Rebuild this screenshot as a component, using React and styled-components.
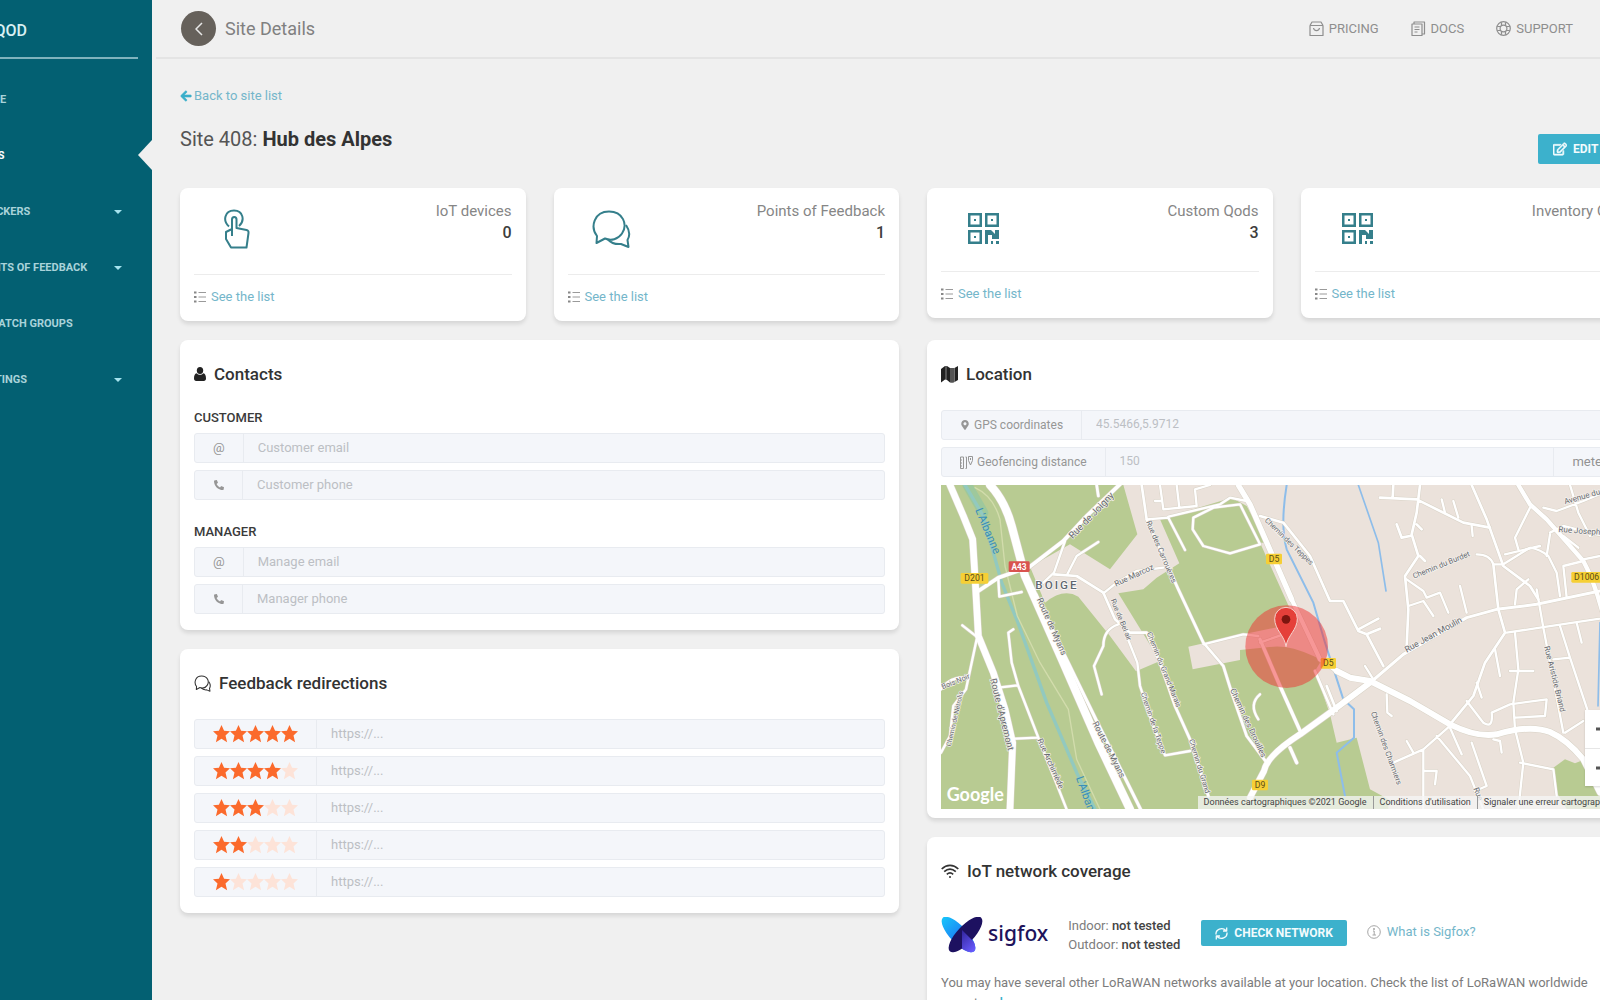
import React from "react";
import styled, { createGlobalStyle } from "styled-components";
import { FaArrowLeft, FaMapMarkerAlt, FaPhoneAlt, FaRegEdit } from "react-icons/fa";

const GlobalStyle = createGlobalStyle`
    * {
        box-sizing: border-box;
    }
    body {
        margin: 0;
        background-color: #f0f0f0;
        color: #7c7c7c;
        font-family: Roboto, "Liberation Sans", sans-serif;
        font-size: 13px;
        line-height: 20px;
    }
    h1, h2, h3, h4, p, ul {
        margin: 0;
        padding: 0;
    }
    button, input {
        font-family: inherit;
    }
    a {
        color: #74b6ca;
        text-decoration: none;
    }
    svg {
        flex-shrink: 0;
    }
`
const Frame = styled.div`
    height: 100vh;
    overflow: hidden;
`
/* The sheet is wider than the window on both sides */
const Shell = styled.div`
    display: flex;
    height: 100%;
    margin: 0 -74px 0 -108px;
`
const Sidebar = styled.aside`
    width: 260px;
    flex-shrink: 0;
    background-color: #036072;
    color: #b5dbe1;
`
const Brand = styled.div`
    height: 59px;
    margin: 0 14px 0 15px;
    padding: 4px 0 0 60px;
    display: flex;
    align-items: center;
    border-bottom: 2px solid #7fb3bd;
    color: #d8f0f3;
    font-size: 16px;
    font-weight: 500;
`
const Menu = styled.ul`
    list-style: none;
    padding-top: 13px;
`
const MenuItem = styled.li`
    position: relative;
    &::after {
        content: "";
        display: ${props => props.$active ? "block" : "none"};
        position: absolute;
        right: 0;
        top: 12px;
        border: 15px solid transparent;
        border-left-width: 0;
        border-right: 14px solid #f0f0f0;
    }
`
const MenuLink = styled.a`
    height: 56px;
    padding: 0 30px 0 83px;
    display: flex;
    align-items: center;
    justify-content: space-between;
    color: ${props => props.$active ? "#ffffff" : "#a9d3da"};
    font-size: 11px;
    font-weight: 700;
    white-space: nowrap;
`
const Caret = styled.span`
    border: 4px solid transparent;
    border-top-color: #a5e3ee;
    border-bottom-width: 0;
`
const Main = styled.main`
    flex: 1;
    min-width: 0;
    overflow-y: auto;
    scrollbar-width: none;
`
const Header = styled.header`
    height: 59px;
    margin-left: 4px;
    padding: 0 101px 0 25px;
    display: flex;
    align-items: center;
    border-bottom: 2px solid #e4e4e4;
`
const RoundButton = styled.button`
    width: 35px;
    height: 35px;
    margin-right: 9px;
    padding: 0;
    display: flex;
    align-items: center;
    justify-content: center;
    border: none;
    border-radius: 50%;
    background-color: #66615b;
    color: #e8e8e8;
`
const PageName = styled.h1`
    flex-grow: 1;
    color: #808080;
    font-size: 18px;
    font-weight: 400;
`
const TopNav = styled.nav`
    display: flex;
    gap: 32px;
`
const TopLink = styled.a`
    display: flex;
    align-items: center;
    gap: 5px;
    color: #8e8e8e;
    font-size: 13px;
`
const Content = styled.div`
    padding: 27px 28px 28px;
`
const BackLink = styled.a`
    width: fit-content;
    height: 20px;
    display: flex;
    align-items: center;
    gap: 2px;
    > svg {
        color: #3aafca;
        stroke: #3aafca;
        stroke-width: 30px;
    }
`
const TitleRow = styled.div`
    display: flex;
    align-items: flex-start;
    justify-content: space-between;
    margin: 19px 0 24px;
`
const Title = styled.h2`
    color: #555555;
    font-size: 20px;
    font-weight: 400;
    line-height: 28px;
    > b {
        color: #333333;
        font-weight: 700;
    }
`
const Button = styled.button`
    height: 30px;
    margin-top: 9px;
    padding: 0 15px;
    display: flex;
    align-items: center;
    gap: 6px;
    border: none;
    border-radius: 2px;
    background-color: #3cb1cc;
    color: #f2fbfd;
    font-size: 12px;
    font-weight: 700;
    white-space: nowrap;
`
const EditButton = styled(Button)`
    min-width: 108px;
`
const CheckButton = styled(Button)`
    height: 26px;
    margin: 0 0 4px;
    padding: 0 14px;
`
const Stats = styled.div`
    display: grid;
    grid-template-columns: repeat(4, 1fr);
    align-items: start;
    gap: 28px;
    min-height: 133px;
    margin-bottom: 19px;
`
const Columns = styled.div`
    display: grid;
    grid-template-columns: repeat(2, minmax(0, 1fr));
    gap: 28px;
`
const Column = styled.div`
    display: flex;
    flex-direction: column;
    gap: 19px;
`
const Card = styled.section`
    padding: 0 14px ${props => props.$bottom || 0}px;
    border-radius: 8px;
    background-color: #ffffff;
    box-shadow: 0 3px 4px rgba(0, 0, 0, 0.11);
`
const StatBody = styled.div`
    height: ${props => props.$tall ? 87 : 84}px;
    display: flex;
    justify-content: space-between;
    border-bottom: 1px solid #ececec;
`
const StatIcon = styled.div`
    width: 86px;
    height: 82px;
    display: flex;
    align-items: center;
    justify-content: center;
    color: #357f8b;
`
const StatText = styled.div`
    padding-top: 12px;
    text-align: right;
    color: #868686;
    font-size: 15px;
    line-height: 22px;
    white-space: nowrap;
    > strong {
        display: block;
        color: #3d3d3d;
        font-size: 16px;
        font-weight: 500;
    }
`
const StatFoot = styled.div`
    height: 46px;
    padding-bottom: 2px;
    display: flex;
    align-items: center;
    gap: 5px;
    color: #9a9a9a;
`
const CardTitle = styled.h3`
    height: 70px;
    padding: 22px 0 24px;
    display: flex;
    align-items: center;
    gap: 8px;
    color: #333333;
    font-size: 17px;
    font-weight: 500;
    line-height: 24px;
`
const GroupTitle = styled.h4`
    margin-bottom: 7px;
    color: #3a3a3a;
    font-size: 13px;
    font-weight: 500;
    line-height: 16px;
`
const Fields = styled.div`
    display: flex;
    flex-direction: column;
    gap: 7px;
    font-size: ${props => props.$compact ? 12 : 13}px;
    & + ${GroupTitle} {
        margin-top: 24px;
    }
`
const Field = styled.div`
    height: 30px;
    display: flex;
    border: 1px solid #e8ebf0;
    border-radius: 3px;
    background-color: #f4f6fa;
`
const Addon = styled.label`
    min-width: ${props => props.$width || 48}px;
    padding: 0 18px;
    display: flex;
    align-items: center;
    justify-content: center;
    gap: 4px;
    border-right: 1px solid #e8ebf0;
    color: #969696;
    white-space: nowrap;
`
const Unit = styled.span`
    padding: 0 18px;
    border-left: 1px solid #e8ebf0;
    color: #929292;
    font-size: 13px;
    line-height: 28px;
`
const Input = styled.input`
    flex: 1;
    min-width: 0;
    padding: 0 14px 2px;
    border: none;
    outline: none;
    background: none;
    color: #bcbfc4;
    font-size: inherit;
    &::placeholder {
        color: #bcbfc4;
        opacity: 1;
    }
`
const MapBox = styled.div`
    position: relative;
    height: 324px;
    margin-top: 8px;
    overflow: hidden;
    > svg {
        display: block;
        width: 100%;
        height: 100%;
    }
`
const ZoomBox = styled.div`
    position: absolute;
    right: 7px;
    bottom: 23px;
    width: 40px;
    background-color: #ffffff;
    box-shadow: 0 1px 2px rgba(0, 0, 0, 0.15);
`
const ZoomButton = styled.button`
    width: 100%;
    height: 38px;
    padding: 0;
    display: flex;
    align-items: center;
    justify-content: center;
    border: none;
    background: none;
    color: #555555;
    & + & {
        border-top: 1px solid #e6e6e6;
    }
`
const Credits = styled.div`
    position: absolute;
    right: 0;
    bottom: 0;
    display: flex;
    padding-right: 4px;
    background-color: rgba(245, 245, 245, 0.75);
    color: #444444;
    font-size: 9px;
    line-height: 13px;
    white-space: nowrap;
    > * {
        padding: 0 6px;
        color: inherit;
    }
    > * + * {
        border-left: 1px solid #999999;
    }
`
const Network = styled.div`
    height: 56px;
    display: flex;
    align-items: center;
    gap: 20px;
    white-space: nowrap;
    > a {
        margin-bottom: 6px;
        display: flex;
        align-items: center;
        gap: 6px;
    }
`
const Sigfox = styled.div`
    display: flex;
    align-items: center;
    gap: 5px;
    color: #20135b;
    font-family: "Noto Sans", "Open Sans", sans-serif;
    font-size: 21px;
    font-weight: 500;
    line-height: 36px;
    > span {
        padding-bottom: 4px;
    }
`
const Coverage = styled.div`
    margin-right: 1px;
    line-height: 19px;
    b {
        color: #444444;
        font-weight: 500;
    }
`
const Note = styled.p`
    margin-top: 10px;
    a {
        color: #3cb1cc;
        font-weight: 500;
    }
`

const Line = ({ size, width, height, box = "0 0 24 24", stroke = 1.5, children }) => (
    <svg width={width || size} height={height || size} viewBox={box} fill="none" stroke="currentColor"
        strokeWidth={stroke} strokeLinejoin="round" aria-hidden="true">
        {children}
    </svg>
)
const TouchIcon = () => (
    <Line width={26} height={40} box="0 0 26 40" stroke={2}>
        <path d="M5 17.500C-1.500 12 .5 1.500 10 1.500S21 12 15 17" />
        <path d="M8 27V10.500c0-3.500 4.500-3.500 4.500 0V19l10 2c1.500.3 2.300 1.500 2 3l-2 14.500H7L2 30v-7l6-3" />
    </Line>
)
const BubblesIcon = ({ size = 40, stroke = 2 }) => (
    <Line size={size} box="0 0 40 40" stroke={stroke}>
        <path d="M6 27C-1 18 3 2.500 18 2.500c14 0 19 13 13 22-4 6-11 7.500-17 5L5.500 34z" />
        <path d="M35 16c4 6 4 11 1.500 15l1 7-7.500-3c-6 .5-10-1-13-4.500" />
    </Line>
)
const QrIcon = () => (
    <svg width="32" height="32" viewBox="0 0 32 32" fill="currentColor" aria-hidden="true">
        <path fillRule="evenodd" d="M0 0h14v14H0zM2.500 2.500v9h9v-9zM17 0h14v14H17zM19.500 2.500v9h9v-9zM0 17h14v14H0zM2.500 19.500v9h9v-9z" />
        <path d="M6 6h2v2H6zM23 6h2v2h-2zM6 23h2v2H6zM17 17h6l4 4V17h4v9h-7v-4h-4v9h-3zM23 28h2v3h-2zM28 28h3v3h-3z" />
    </svg>
)
const ListIcon = () => (
    <Line size={12} box="0 0 12 12" stroke={1}>
        <path d="M4.500 1.500H12M4.500 6H12M4.500 10.500H12" />
        <path d="M0 1.500h2.500M0 6h2.500M0 10.500h2.500" stroke="#888888" strokeWidth="2" />
    </Line>
)
const UserIcon = () => (
    <svg width="12" height="14" viewBox="0 0 12 14" fill="#222222" aria-hidden="true">
        <ellipse cx="6" cy="3.500" rx="3.200" ry="3.500" />
        <path d="M2.600 6.200C.8 6.600 0 8.500 0 11.500 0 13 .8 14 2.200 14h7.600c1.400 0 2.200-1 2.200-2.500 0-3-.8-4.900-2.600-5.300-2 2-4.800 2-6.800 0z" />
    </svg>
)
const FoldedMapIcon = () => (
    <svg width="17" height="17" viewBox="0 0 17 17" aria-hidden="true">
        <path fill="#222222" d="M0 3l4-3v13.500L0 16.500zM6 0l3 2v14.500L6 14zM13.500 2L17 0v14l-3.500 2z" />
        <path fill="#555555" d="M4 0h2v14L4 13.500zM9 2h4.500v14c-1.500 1-3 1-4.500.5z" />
    </svg>
)
const WifiIcon = () => (
    <Line width={18} height={15} box="0 0 18 15" stroke={1.7}>
        <path d="M.7 5c5-4.800 11.600-4.800 16.600 0M3.200 7.700c3.700-3.400 7.900-3.400 11.600 0M5.800 10.300c2.200-1.900 4.200-1.900 6.400 0" />
        <circle cx="9" cy="13" r="1" fill="currentColor" stroke="none" />
    </Line>
)
const FenceIcon = () => (
    <Line size={13} box="0 0 13 13" stroke={1}>
        <path d="M.5 1h3v11.500h-3zM5.500 1h1v11.500h-1M.5 4h1.500M.5 7h1.500M.5 10h1.500" />
        <path d="M12.500.5v4L10.500 9 8.500 4.500v-4zM10.500 2v2" />
    </Line>
)
const BagIcon = () => (
    <Line size={15} box="0 0 15 15" stroke={1.200}>
        <path d="M1 4.500h13v10H1zM1 4.500L3 1h9l2 3.500M4.500 7c.5 3.500 5.500 3.500 6 0" />
    </Line>
)
const DocsIcon = () => (
    <Line size={15} box="0 0 15 15" stroke={1.200}>
        <path d="M1 3h10v11.500H1zM3 3V1h10.500v12H11M3.500 6h5M3.500 8.500h5M3.500 11h3" />
    </Line>
)
const SupportIcon = () => (
    <Line size={15} box="0 0 15 15" stroke={1.200}>
        <circle cx="7.500" cy="7.500" r="6.800" />
        <circle cx="7.500" cy="7.500" r="3.400" />
        <path d="M5.500 1.200v3.500M9.500 1.200v3.500M5.500 10.300v3.500M9.500 10.300v3.500M1.200 5.500h3.500M1.200 9.500h3.500M10.300 5.500h3.500M10.300 9.500h3.500" />
    </Line>
)
const ReloadIcon = () => (
    <Line size={13} box="0 0 13 13" stroke={1.300}>
        <path d="M1 7.500C.5 2.500 7-.5 11 3.500M11.700.5v3.500H8M12 5.500c.5 5-6 8-10 4M1.300 12.500V9H5" />
    </Line>
)
const InfoIcon = () => (
    <Line size={14} box="0 0 14 14" stroke={1}>
        <circle cx="7" cy="7" r="6.300" stroke="#a5a5a5" />
        <path d="M6 6h1.200v4M5.500 10h3.500M6.500 3.500h1v1h-1z" stroke="#a5a5a5" />
    </Line>
)
const Butterfly = () => (
    <svg width="42" height="36" viewBox="0 0 42 36" aria-hidden="true">
        <defs>
            <linearGradient id="wing" x1="0" x2="0.5" y1="0" y2="0">
                <stop offset="0" stopColor="#17c4fa" />
                <stop offset="1" stopColor="#1c86f5" />
            </linearGradient>
            <linearGradient id="tail" x1="0.5" x2="1" y1="0" y2="0">
                <stop offset="0" stopColor="#3326a0" />
                <stop offset="1" stopColor="#6a5cff" />
            </linearGradient>
            <clipPath id="right-half">
                <path d="M21 13L42 34V36H21z" />
            </clipPath>
        </defs>
        <ellipse cx="17.500" cy="17.500" rx="23" ry="8.500" transform="rotate(47 17.500 17.500)" fill="url(#wing)" />
        <ellipse cx="24.500" cy="17.500" rx="23" ry="8.500" transform="rotate(-47 24.500 17.500)" fill="#1d1160" />
        <g clipPath="url(#right-half)">
            <ellipse cx="17.500" cy="17.500" rx="23" ry="8.500" transform="rotate(47 17.500 17.500)" fill="url(#tail)" />
        </g>
    </svg>
)
const Stars = ({ count }) => (
    <svg width="85" height="18" viewBox="0 0 85 18" role="img" aria-label={`${count} stars`}>
        {[0, 1, 2, 3, 4].map(i => (
            <path key={i} transform={`translate(${i * 17} 0)`} fill={i < count ? "#fb6a2c" : "#fde3d8"}
                d="M8.500 0l2.600 5.800 5.900.4-4.500 4.300 1.600 6.800-5.600-3.500-5.600 3.500 1.600-6.800L0 6.200l5.900-.4z" />
        ))}
    </svg>
)

// [width, path], in thirds of a pixel
const roads = [
    [20, "M60 27L100 120L128 190L136 320L145 480L190 590L225 700L248 800L240 1000"],
    [24, "M180 27Q225 75 245 150L285 300L400 560L505 800L600 1000"],
    [9, "M318 355L400 530L500 735L632 1000"],
    [11, "M145 345L205 305L300 272L400 195L470 120L575 20"],
    [8, "M500 27L505 60"],
    [7, "M405 195L372 290L340 320M505 198L440 240L412 295"],
    [8, "M372 295L440 300L520 350L555 430L600 470L650 470L690 560L735 690L780 790L835 960"],
    [7, "M520 352L560 320L620 285L700 275"],
    [7, "M565 445Q520 460 520 510L492 570L515 655"],
    [7, "M590 480L622 560L630 630L670 750L705 838L780 825"],
    [8, "M635 27L650 130L700 240L745 340L820 500L880 570L905 650L950 780L1010 860"],
    [7, "M650 130L715 125L765 222M690 27L700 100L800 90L795 40L840 27M740 27L748 95M675 75L695 75"],
    [7, "M715 122L870 85L900 65L950 75"],
    [7, "M790 125L850 95L930 85L990 205L900 232L820 210L788 160Z"],
    [7, "M820 505L940 475L985 480"],
    [7, "M990 655Q955 685 985 730"],
    [7, "M205 310L208 362L275 348M97 448L140 482"],
    [7, "M140 490L108 640L70 690L60 780L33 830M33 640Q60 600 110 605"],
    [7, "M250 460L235 470L245 560L265 630L325 785L410 1000M205 635L262 628M255 788L322 785"],
    [16, "M925 27L960 85L1085 370"],
    [13, "M1085 370L1170 550L1220 585"],
    [18, "M1220 585L1260 605L1320 615L1440 675L1560 745Q1640 785 1700 775Q1800 745 1860 768Q1910 790 1960 850L2010 950"],
    [18, "M1320 620L1200 710L1110 775Q1010 840 1002 885L960 965"],
    [10, "M990 490L1050 630L1115 775M1080 815L1100 860"],
    [8, "M1155 585L1210 715M1190 630L1220 705"],
    [7, "M990 500L1060 475"],
    [8, "M990 120L1060 140L1140 240L1200 375L1240 375L1285 465L1310 475L1360 570M1285 460L1345 428M1310 475L1350 458"],
    [9, "M1330 612L1420 535L1610 425L1700 400L1820 385L2010 345L2110 330"],
    [8, "M1470 27L1460 110L1445 175L1465 240L1425 300L1435 400L1430 510M1350 65L1460 70L1530 105L1600 140L1680 155M1390 27L1388 65M1400 145L1415 185L1440 180M1460 145L1475 160M1470 240L1485 255"],
    [8, "M1625 27L1670 130L1720 270L1800 330L1825 370M1690 265L1705 400L1725 470L1665 560L1630 660L1560 745"],
    [7, "M1430 310L1480 345L1490 365L1530 350L1555 410M1435 390L1480 375L1510 420M1590 330L1610 410M1535 70L1545 110M1570 75L1585 125M1625 150L1628 180"],
    [7, "M1640 235Q1680 235 1690 265L1720 265L1800 215Q1830 220 1855 240L1880 290L1890 360"],
    [7, "M1800 95L1755 185L1765 220M1725 235L1830 210M1860 175L1850 240M1755 385L1760 340L1795 310M1910 365L1900 270L1960 255"],
    [13, "M1765 27L1800 85L1850 130L1960 255Q1990 310 2015 400L2030 450"],
    [7, "M1730 470L1830 455L2010 428L2110 410M1820 340L1840 455L1860 560L1900 770"],
    [7, "M1840 95L1880 105L1960 75L2020 50M1860 170L1900 150L2040 185M1900 180L1945 215M1920 27L1945 110L1980 180M1960 250L2060 230"],
    [7, "M1755 470L1765 580L1750 680L1755 760L1780 860L1765 1000M1740 585L1810 585M1695 520L1710 600M1770 860L1870 880L1880 960"],
    [7, "M1610 675L1660 740Q1690 760 1685 710L1740 685L1850 670L1845 720L1755 725M1640 620L1655 665"],
    [7, "M1890 450L1920 545L1975 710M1920 545L1870 550M1940 440L1955 500M1905 770L1960 735"],
    [7, "M1565 745L1480 820L1390 860M1520 780L1620 900L1660 1000M1480 820L1480 1000M1485 885L1520 885L1515 925M1430 795L1450 830M1560 755L1595 835"],
    [7, "M1370 655L1372 710L1385 720M1305 570L1330 610M1625 800L1670 930L1635 945M1690 790L1710 795L1715 830"],
]

// [x, y, angle, size, text]
const labels = [
    [428, 190, -46, 29, "Rue de Joigny"],
    [648, 138, 67, 23, "Rue des Carrouères"],
    [558, 332, -25, 24, "Rue Marcoz"],
    [542, 372, 68, 22, "Rue de Bel air"],
    [320, 370, 66, 26, "Route de Myans"],
    [487, 742, 63, 26, "Route de Myans"],
    [180, 610, 76, 28, "Route d'Apremont"],
    [322, 792, 66, 24, "Rue Archimède"],
    [650, 472, 68, 22, "Chemin du Grand Marais"],
    [632, 652, 71, 22, "Chemin de la Teppe"],
    [777, 792, 73, 22, "Chemin du Grand"],
    [900, 642, 65, 24, "Chemin des Drouilles"],
    [62, 812, -77, 20, "Chemin de Nétrolis"],
    [38, 640, -22, 22, "Bois Noir"],
    [1003, 135, 44, 22, "Chemin des Teppes"],
    [1452, 308, -22, 23, "Chemin du Burdet"],
    [1430, 530, -29, 26, "Rue Jean Moulin"],
    [1842, 512, 76, 24, "Rue Aristide Briand"],
    [1322, 710, 70, 23, "Chemin des Charmiers"],
    [1905, 85, -16, 24, "Avenue du Granier"],
    [1885, 168, 4, 24, "Rue Joseph Fontanet"],
    [1630, 938, 68, 24, "Rue"],
]
const shields = [
    [92, 291, 83, "D201"],
    [1008, 233, 48, "D5"],
    [1172, 546, 46, "D5"],
    [966, 911, 48, "D9"],
    [1924, 288, 92, "D1006"],
]

const TownMap = () => (
    <svg viewBox="33 27 2073 972" preserveAspectRatio="xMinYMin slice" role="img" aria-label="Map around the site"
        fontFamily="Roboto, sans-serif">
        <rect x="33" y="27" width="2600" height="972" fill="#ebe2db" />
        <path fill="#b8cb92" d="M33 27H580L622 175L540 280L420 205L300 272L345 380Q400 335 445 362L540 480L618 586L690 555L565 352L640 340L680 305L748 262L690 130L905 65L950 90L1010 200H990L1085 410L1170 560L1155 585L1200 715L1220 800L1280 785L1320 940L1375 970V999H33Z" />
        <path fill="#ebe2db" d="M775 512L940 475L1060 450L1125 440L1170 550L1150 540Q1080 508 1030 512L930 522V552L788 580Z" />
        <path fill="#b8cb92" d="M1870 875L1905 850L1935 862L1965 850L2040 999H1910L1880 950Z" />
        <g fill="none" strokeLinejoin="round" strokeLinecap="round">
            <path stroke="#9ec89c" strokeWidth="30" d="M112 27L160 110" />
            <path stroke="#92c9bf" strokeWidth="10" d="M105 27L160 120L215 320L262 435L350 680L440 890L495 1000" />
            <path stroke="#d2dcac" strokeWidth="4" d="M135 35Q190 60 210 130L225 270L262 420L330 560L415 700L440 850L510 1000" />
            <path stroke="#8dbdea" strokeWidth="6" d="M1070 27Q1050 150 1070 220L1150 380L1185 500L1240 670L1272 700V785L1220 830L1245 960" />
            <path stroke="#8dbdea" strokeWidth="5" d="M1285 27L1345 200L1368 345M2010 440L2004 690" />
            {roads.map(([width, d]) => <path key={d} d={d} stroke="#d8d2c6" strokeWidth={width + 3} />)}
            {roads.map(([width, d]) => <path key={d} d={d} stroke="#ffffff" strokeWidth={width} />)}
        </g>
        <g fill="#66696e" stroke="#f6f3ef" strokeWidth="4" paintOrder="stroke">
            {labels.map(([x, y, angle, size, text]) => (
                <text key={`${text}${x}`} fontSize={size} transform={`translate(${x} ${y}) rotate(${angle})`}>{text}</text>
            ))}
        </g>
        <g fill="#3b8fb8" fontSize="34">
            <text transform="translate(135 102) rotate(67)">L'Albanne</text>
            <text transform="translate(437 905) rotate(70)">L'Albanne</text>
        </g>
        <text x="316" y="338" fontSize="35" fontWeight="500" letterSpacing="6" fill="#5f6670"
            stroke="#ffffff" strokeWidth="4" paintOrder="stroke">BOIGE</text>
        <rect x="236" y="256" width="63" height="32" rx="4" fill="#d9534f" />
        <text x="267" y="281" fontSize="25" fontWeight="700" textAnchor="middle" fill="#ffffff">A43</text>
        {shields.map(([x, y, width, text]) => (
            <g key={`${text}${x}`}>
                <rect x={x} y={y} width={width} height="32" rx="4" fill="#f6cf35" />
                <text x={x + width / 2} y={y + 25} fontSize="26" textAnchor="middle" fill="#5a4d16">{text}</text>
            </g>
        ))}
        <circle cx="1070" cy="512" r="124" fill="#f03030" fillOpacity="0.5" />
        <path d="M1068 512C1064 478 1034 462 1034 428A34 34 0 0 1 1102 428C1102 462 1072 478 1068 512Z"
            fill="#e5403a" stroke="#f7d5cf" strokeWidth="3" />
        <circle cx="1068" cy="430" r="13" fill="#7c150f" />
        <text x="50" y="976" fontSize="54" fontWeight="700" fontFamily="Lato, sans-serif" fill="#ffffff">Google</text>
    </svg>
)

const Stat = ({ icon, label, value, tall }) => (
    <Card>
        <StatBody $tall={tall}>
            <StatIcon>{icon}</StatIcon>
            <StatText>{label}<strong>{value}</strong></StatText>
        </StatBody>
        <StatFoot>
            <ListIcon />
            <a href="#list">See the list</a>
        </StatFoot>
    </Card>
)
const TextField = ({ id, addon, width, unit, label, ...rest }) => (
    <Field>
        <Addon htmlFor={id} $width={width} aria-label={label}>{addon}</Addon>
        <Input id={id} {...rest} />
        {unit && <Unit>{unit}</Unit>}
    </Field>
)

const menu = [
    { text: "HOME" },
    { text: "SITES", active: true },
    { text: "TRACKERS", caret: true },
    { text: "POINTS OF FEEDBACK", caret: true },
    { text: "DISPATCH GROUPS" },
    { text: "SETTINGS", caret: true },
]

export default function App() {
    return (
        <Frame>
            <GlobalStyle />
            <Shell>
                <Sidebar>
                    <Brand>MY QOD</Brand>
                    <Menu>
                        {menu.map(item => (
                            <MenuItem key={item.text} $active={item.active}>
                                <MenuLink href="#menu" $active={item.active}>
                                    {item.text}
                                    {item.caret && <Caret />}
                                </MenuLink>
                            </MenuItem>
                        ))}
                    </Menu>
                </Sidebar>
                <Main>
                    <Header>
                        <RoundButton aria-label="Back">
                            <Line width={8} height={14} box="0 0 8 14"><path d="M7 1L1 7l6 6" /></Line>
                        </RoundButton>
                        <PageName>Site Details</PageName>
                        <TopNav>
                            <TopLink href="#pricing"><BagIcon />PRICING</TopLink>
                            <TopLink href="#docs"><DocsIcon />DOCS</TopLink>
                            <TopLink href="#support"><SupportIcon />SUPPORT</TopLink>
                        </TopNav>
                    </Header>
                    <Content>
                        <BackLink href="#sites"><FaArrowLeft size={12} />Back to site list</BackLink>
                        <TitleRow>
                            <Title>Site 408: <b>Hub des Alpes</b></Title>
                            <EditButton><FaRegEdit size={14} stroke="currentColor" strokeWidth={24} />EDIT SITE</EditButton>
                        </TitleRow>
                        <Stats>
                            <Stat tall icon={<TouchIcon />} label="IoT devices" value="0" />
                            <Stat tall icon={<BubblesIcon />} label="Points of Feedback" value="1" />
                            <Stat icon={<QrIcon />} label="Custom Qods" value="3" />
                            <Stat icon={<QrIcon />} label="Inventory Qods" value="0" />
                        </Stats>
                        <Columns>
                            <Column>
                                <Card $bottom={16}>
                                    <CardTitle><UserIcon />Contacts</CardTitle>
                                    <GroupTitle>CUSTOMER</GroupTitle>
                                    <Fields>
                                        <TextField id="customer-email" label="Customer email" addon="@" placeholder="Customer email" />
                                        <TextField id="customer-phone" label="Customer phone" addon={<FaPhoneAlt size={10} />} placeholder="Customer phone" />
                                    </Fields>
                                    <GroupTitle>MANAGER</GroupTitle>
                                    <Fields>
                                        <TextField id="manager-email" label="Manager email" addon="@" placeholder="Manage email" />
                                        <TextField id="manager-phone" label="Manager phone" addon={<FaPhoneAlt size={10} />} placeholder="Manager phone" />
                                    </Fields>
                                </Card>
                                <Card $bottom={16}>
                                    <CardTitle><BubblesIcon size={17} stroke={2.500} />Feedback redirections</CardTitle>
                                    <Fields>
                                        {[5, 4, 3, 2, 1].map(count => (
                                            <TextField key={count} id={`stars-${count}`} width={122}
                                                addon={<Stars count={count} />} placeholder="https://..." />
                                        ))}
                                    </Fields>
                                </Card>
                            </Column>
                            <Column>
                                <Card $bottom={9}>
                                    <CardTitle><FoldedMapIcon />Location</CardTitle>
                                    <Fields $compact>
                                        <TextField id="gps" addon={<><FaMapMarkerAlt size={10} />GPS coordinates</>} defaultValue="45.5466,5.9712" />
                                        <TextField id="geofence" addon={<><FenceIcon />Geofencing distance</>} defaultValue="150" unit="meters" />
                                    </Fields>
                                    <MapBox>
                                        <TownMap />
                                        <ZoomBox>
                                            <ZoomButton aria-label="Zoom in">
                                                <Line size={18} box="0 0 18 18" stroke={3}><path d="M0 9h18M9 0v18" /></Line>
                                            </ZoomButton>
                                            <ZoomButton aria-label="Zoom out">
                                                <Line size={18} box="0 0 18 18" stroke={3}><path d="M0 9h18" /></Line>
                                            </ZoomButton>
                                        </ZoomBox>
                                        <Credits>
                                            <span>Données cartographiques ©2021 Google</span>
                                            <a href="#terms">Conditions d'utilisation</a>
                                            <a href="#report">Signaler une erreur cartographique</a>
                                        </Credits>
                                    </MapBox>
                                </Card>
                                <Card $bottom={16}>
                                    <CardTitle><WifiIcon />IoT network coverage</CardTitle>
                                    <Network>
                                        <Sigfox><Butterfly /><span>sigfox</span></Sigfox>
                                        <Coverage>
                                            <div>Indoor: <b>not tested</b></div>
                                            <div>Outdoor: <b>not tested</b></div>
                                        </Coverage>
                                        <CheckButton><ReloadIcon />CHECK NETWORK</CheckButton>
                                        <a href="#sigfox"><InfoIcon />What is Sigfox?</a>
                                    </Network>
                                    <Note>
                                        You may have several other LoRaWAN networks available at your location. Check
                                        the list of LoRaWAN worldwide operators <a href="#operators">here</a>.
                                    </Note>
                                </Card>
                            </Column>
                        </Columns>
                    </Content>
                </Main>
            </Shell>
        </Frame>
    )
}
